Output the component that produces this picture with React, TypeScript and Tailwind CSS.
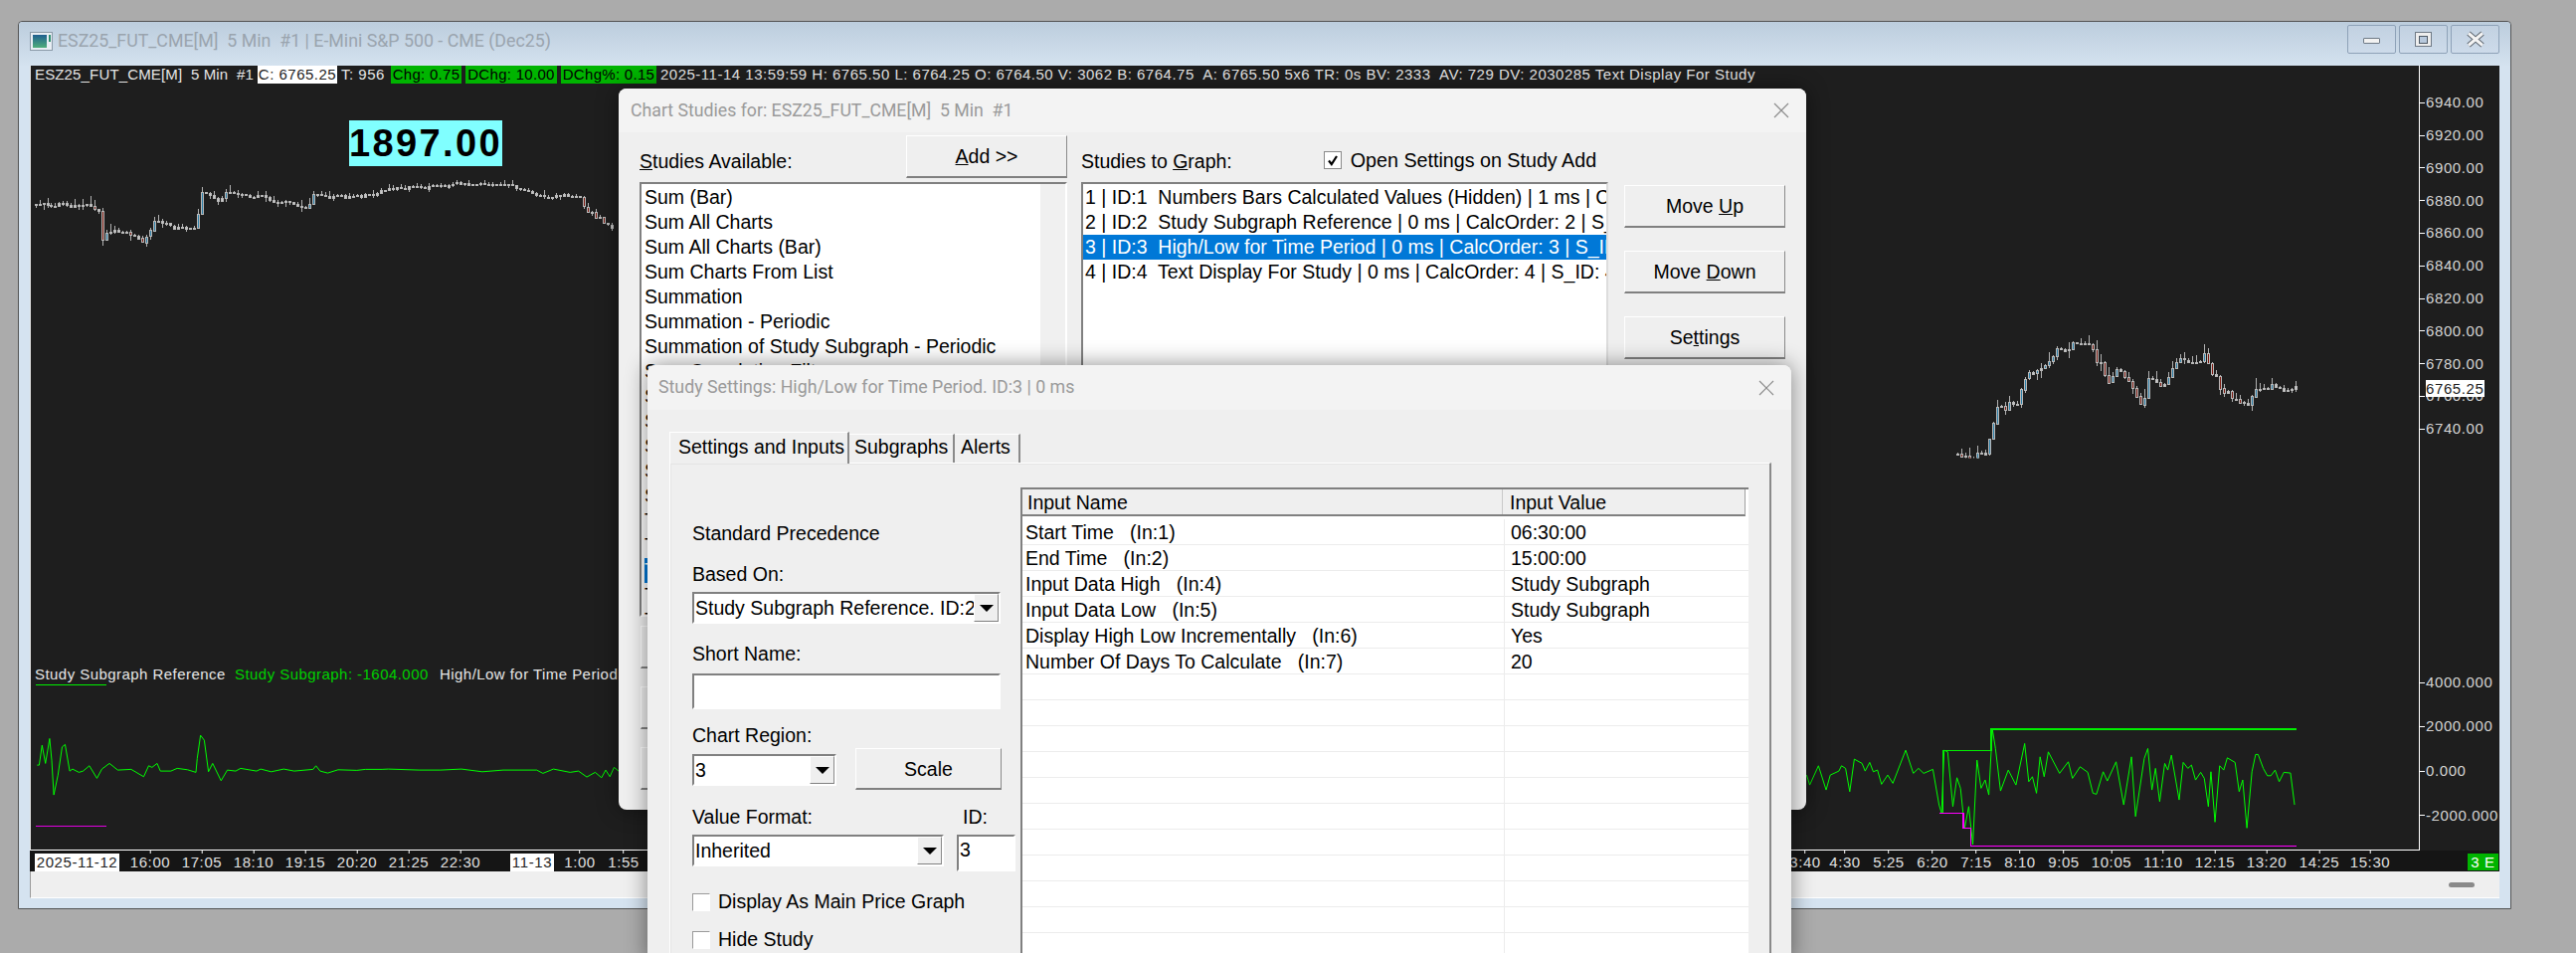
import type { ReactNode } from "react";

type Pt = [number, number];

// ---- chart data, all in page pixels ----
// first stretch of closes, one per bar, read off the reference
const leftCloses = [105, 105, 103, 108, 110, 110, 102, 102, 108, 113, 108, 108, 108, 105, 110, 120, 127, 215, 193, 190, 184, 190, 188, 188, 198, 200, 208, 220, 203, 184, 155, 157, 163, 163, 170, 178, 173, 173, 178, 180, 178, 135, 70, 72, 78, 86, 94, 86, 68, 68, 72, 76, 76, 78, 83, 85, 78, 78, 84, 92, 98, 100, 100, 96, 100, 106, 112, 115, 115, 104, 74];
const leftWay: Pt[] = [[317, 197], [352, 198], [394, 190], [468, 184], [510, 185], [539, 197], [580, 197], [589, 213], [614, 228]];
const rightWay: Pt[] = [[1968, 460], [1995, 458], [2003, 427], [2010, 407], [2025, 408], [2039, 377], [2054, 365], [2078, 348], [2102, 350], [2120, 380], [2129, 370], [2153, 405], [2160, 383], [2175, 387], [2184, 367], [2217, 357], [2230, 387], [2254, 410], [2274, 388], [2296, 390], [2309, 391]];

const studyLeft: Pt[] = [[85,390],[90,390],[97,330],[105,385],[115,310],[120,375],[125,480],[135,420],[145,335],[152,328],[163,408],[170,402],[185,412],[195,408],[210,392],[228,430],[240,402],[258,385],[278,405],[310,403],[340,425],[352,392],[360,397],[372,385],[380,408],[405,408],[420,400],[445,404],[465,412],[468,370],[476,300],[485,315],[495,410],[505,385],[525,437],[540,405],[560,408],[572,400],[610,408],[620,402],[645,410],[675,402],[700,408],[745,403],[752,392],[762,408],[780,414],[805,404],[850,406],[870,403],[910,403],[925,402],[1000,405],[1050,405],[1100,402],[1150,410],[1200,405],[1280,405],[1295,415],[1320,402],[1360,412],[1380,408],[1400,426],[1420,412],[1435,428],[1445,405],[1455,425],[1465,397],[1478,410]];
const studyRight: Pt[] = [[72,420],[78,450],[95,392],[110,465],[118,420],[135,408],[140,392],[148,400],[156,470],[165,372],[180,385],[186,408],[195,382],[202,410],[210,405],[218,448],[230,420],[240,445],[265,345],[280,415],[290,400],[300,415],[318,403],[330,510],[335,535],[340,345],[347,350],[357,515],[365,428],[372,460],[380,580],[388,515],[396,630],[404,375],[412,460],[420,435],[427,480],[434,282],[440,340],[450,468],[465,405],[480,450],[497,325],[505,440],[512,425],[520,475],[527,365],[535,425],[543,350],[565,415],[582,380],[590,430],[605,395],[620,412],[630,475],[637,478],[650,410],[658,438],[675,380],[690,510],[705,365],[713,545],[730,370],[737,340],[745,465],[752,400],[760,500],[770,385],[776,405],[783,360],[798,495],[806,382],[815,400],[822,390],[830,435],[840,412],[847,430],[855,515],[860,410],[868,562],[877,392],[885,405],[892,368],[907,382],[915,470],[922,435],[930,580],[940,410],[947,358],[952,358],[962,400],[970,422],[977,422],[985,405],[993,440],[1002,412],[1015,414],[1023,510]];

const toPath = (pts: Pt[], sx: number, ox: number) =>
  pts.map(([x, y], i) => `${i ? "L" : "M"}${(ox + x / sx).toFixed(1)} ${(640 + y / 3).toFixed(1)}`).join(" ");

const stepHigh = toPath([[338,535],[338,346],[432,346],[432,281],[1026,281]], 1.936, 1780);
const stepLow = toPath([[330,535],[377,535],[377,580],[392,580],[392,634],[1026,634]], 1.936, 1780);

function rng(seed: number) {
  let s = seed;
  return () => {
    s = (s * 16807) % 2147483647;
    return s / 2147483647;
  };
}

function interp(way: Pt[], x: number) {
  for (let i = 1; i < way.length; i++) {
    if (x <= way[i][0]) {
      const [x0, y0] = way[i - 1];
      const [x1, y1] = way[i];
      return y0 + ((y1 - y0) * (x - x0)) / (x1 - x0);
    }
  }
  return way[way.length - 1][1];
}

type Candle = { x: number; top: number; h: number; hi: number; lo: number; down: boolean };

function toCandles(closes: Pt[], seed: number, wick: number): Candle[] {
  const r = rng(seed);
  let prev = closes[0][1];
  return closes.map(([x, close]) => {
    const top = Math.min(prev, close);
    const bot = Math.max(prev, close);
    const c = { x, top, h: Math.max(bot - top, 1), hi: top - r() * r() * wick, lo: bot + r() * r() * wick, down: close > prev };
    prev = close;
    return c;
  });
}

function sampled(way: Pt[], seed: number, noise: number): Pt[] {
  const r = rng(seed);
  const out: Pt[] = [];
  for (let x = way[0][0]; x <= way[way.length - 1][0]; x += 4) {
    out.push([x, interp(way, x) + (r() - 0.5) * noise]);
  }
  return out;
}

const candles = [
  ...toCandles(leftCloses.map((z, i): Pt => [33 + i * 4, 170 + z / 3]), 4711, 9),
  ...toCandles(sampled(leftWay, 1234, 4), 8123, 6),
  ...toCandles(sampled(rightWay, 9377, 10), 5521, 11),
];

// ---- axis labels ----
const priceLabels = ["6940.00", "6920.00", "6900.00", "6880.00", "6860.00", "6840.00", "6820.00", "6800.00", "6780.00", "6760.00", "6740.00"];
const studyLabels = ["4000.000", "2000.000", "0.000", "-2000.000"];
const timeLabels: [string, number][] = [["16:00", 151], ["17:05", 203], ["18:10", 255], ["19:15", 307], ["20:20", 359], ["21:25", 411], ["22:30", 463], ["1:00", 583], ["1:55", 627], ["3:40", 1815], ["4:30", 1855], ["5:25", 1899], ["6:20", 1943], ["7:15", 1987], ["8:10", 2031], ["9:05", 2075], ["10:05", 2123], ["11:10", 2175], ["12:15", 2227], ["13:20", 2279], ["14:25", 2332], ["15:30", 2383]];

const availableStudies = ["Sum (Bar)", "Sum All Charts", "Sum All Charts (Bar)", "Sum Charts From List", "Summation", "Summation - Periodic", "Summation of Study Subgraph - Periodic", "Sum Correlation Filter", "Super Trend", "Swing High And Low", "Swing Index", "Swing Volume", "Swing Weighted", "Tick Volume", "Time Range", "Time Series", "Trade Volume", "Trend Line", "True Range"];
const graphStudies = [
  "1 | ID:1  Numbers Bars Calculated Values (Hidden) | 1 ms | CalcOrder: 1 | S_ID: 1",
  "2 | ID:2  Study Subgraph Reference | 0 ms | CalcOrder: 2 | S_ID: 2",
  "3 | ID:3  High/Low for Time Period | 0 ms | CalcOrder: 3 | S_ID: 3",
  "4 | ID:4  Text Display For Study | 0 ms | CalcOrder: 4 | S_ID: 4",
];
const inputs: [string, string][] = [
  ["Start Time   (In:1)", "06:30:00"],
  ["End Time   (In:2)", "15:00:00"],
  ["Input Data High   (In:4)", "Study Subgraph"],
  ["Input Data Low   (In:5)", "Study Subgraph"],
  ["Display High Low Incrementally   (In:6)", "Yes"],
  ["Number Of Days To Calculate   (In:7)", "20"],
  ...Array.from({ length: 11 }, (): [string, string] => ["", ""]),
];

// ---- small win32 style widgets ----
const raised = "border border-t-white border-l-white border-r-[#8a8a8a] border-b-2 border-b-[#808080] bg-[#efefef]";
const inset = "border-2 border-t-[#808080] border-l-[#808080] border-r-white border-b-white bg-white";

function Btn({ children, className }: { children?: ReactNode; className: string }) {
  return <div className={`${raised} ${className} flex items-center justify-center pt-[2px] text-[19.5px] text-black`}>{children}</div>;
}

function Combo({ value, className }: { value: string; className: string }) {
  return (
    <div className={`${inset} ${className} flex items-center overflow-hidden`}>
      <span className="flex-1 pl-[1px] pt-[2px] text-[19.5px] text-black whitespace-nowrap overflow-hidden">{value}</span>
      <span className="w-[25px] h-full shrink-0 flex items-center justify-center bg-[#efefef] border border-t-white border-l-white border-r-[#8a8a8a] border-b-[#808080]">
        <span className="w-0 h-0 border-x-[7px] border-x-transparent border-t-[7px] border-t-black" />
      </span>
    </div>
  );
}

function Check({ label }: { label: string }) {
  return (
    <div className="flex items-center h-[18px] gap-[8px]">
      <span className="w-[18px] h-[18px] border border-[#9a9a9a] border-r-white border-b-white bg-white" />
      <span className="text-[19.5px] text-black">{label}</span>
    </div>
  );
}

function CloseGlyph() {
  return (
    <svg width="16" height="16" viewBox="0 0 16 16" className="shrink-0">
      <path d="M1 1L15 15M15 1L1 15" stroke="#8c8c8c" strokeWidth="1.2" fill="none" />
    </svg>
  );
}

function WinBtn({ children }: { children: ReactNode }) {
  return (
    <div className="w-[49px] h-[29px] flex items-center justify-center rounded-[2px] border border-[#8ea2b8] bg-gradient-to-b from-[#c2d1e1] to-[#cddbea]">
      {children}
    </div>
  );
}

function ChartDrawing() {
  return (
    <svg viewBox="30 66 2403 789" className="absolute inset-0 w-full h-full">
      <defs>
        <clipPath id="priceClip">
          <rect x="30" y="66" width="2403" height="395" />
        </clipPath>
      </defs>
      <g clipPath="url(#priceClip)" shapeRendering="crispEdges">
        {candles.map((c, i) => {
          const x = Math.round(c.x);
          return (
            <g key={i}>
              <line x1={x + 1.5} x2={x + 1.5} y1={c.hi} y2={c.lo} stroke="#b0b0b0" />
              <rect x={x + 0.5} y={Math.round(c.top) + 0.5} width="2" height={Math.round(c.h)} fill={c.h < 3 ? "#c8c8c8" : c.down ? "#7d1a10" : "#2c7fa8"} stroke="#b9b9b9" />
            </g>
          );
        })}
      </g>
      <path d={toPath(studyLeft, 2.376, 0)} stroke="#00ff00" strokeWidth="1" fill="none" />
      <path d={toPath(studyRight, 1.936, 1780)} stroke="#00ff00" strokeWidth="1" fill="none" />
      <path d={stepHigh} stroke="#00f000" strokeWidth="1.6" fill="none" shapeRendering="crispEdges" />
      <path d={stepLow} stroke="#ff00ff" strokeWidth="1.6" fill="none" shapeRendering="crispEdges" />
      <path d="M34 689.5H106" stroke="#00f000" shapeRendering="crispEdges" />
      <path d="M34 831.5H106" stroke="#e000e0" shapeRendering="crispEdges" />
    </svg>
  );
}

function ChartWindow() {
  const chartText = "text-[15px] leading-[18px] whitespace-pre";
  return (
    <div className="absolute left-[18px] top-[21px] w-[2507px] h-[893px] border border-[#555] rounded-t-[4px] bg-[#d5e3f0]">
      {/* title bar */}
      <div className="h-[44px] flex items-center pl-[11px] pr-[11px] bg-gradient-to-b from-[#bccddd] to-[#d4e2ef] rounded-t-[4px]">
        <svg width="23" height="19" viewBox="0 0 23 19" className="shrink-0 mt-[-6px]">
          <defs>
            <linearGradient id="appIcon" x1="0" y1="0" x2="0" y2="1">
              <stop offset="0" stopColor="#1f5f8f" />
              <stop offset="1" stopColor="#4fae7a" />
            </linearGradient>
          </defs>
          <rect x="0.5" y="0.5" width="22" height="18" fill="#e8eef4" stroke="#8b9aa8" />
          <rect x="3" y="3" width="14" height="13" fill="url(#appIcon)" />
          <rect x="19" y="3" width="2" height="7" fill="#2f8f6f" />
        </svg>
        <span className="ml-[5px] mt-[-6px] text-[17.8px] text-[#9aa4ae] whitespace-pre font-['Roboto',sans-serif]">
          ESZ25_FUT_CME[M]  5 Min  #1 | E-Mini S&amp;P 500 - CME (Dec25)
        </span>
        <div className="ml-auto flex gap-[3px] mt-[-9px]">
          <WinBtn>
            <span className="w-[17px] h-[6px] mt-[3px] rounded-[1px] bg-[#f2f2f2] border border-[#6f7a86]" />
          </WinBtn>
          <WinBtn>
            <span className="w-[17px] h-[15px] bg-[#eeeeee] border border-[#6f7a86] flex items-center justify-center">
              <span className="w-[9px] h-[8px] bg-[#b8c9dd] border border-[#4f5a66]" />
            </span>
          </WinBtn>
          <WinBtn>
            <svg width="20" height="17" viewBox="0 0 20 17">
              <path d="M3 2.5L17 14.5M17 2.5L3 14.5" stroke="#5d6670" strokeWidth="5" fill="none" />
              <path d="M3 2.5L17 14.5M17 2.5L3 14.5" stroke="#f4f4f4" strokeWidth="3" fill="none" />
            </svg>
          </WinBtn>
        </div>
      </div>

      {/* chart */}
      <div className="mx-[11px] w-[2483px] h-[810px] bg-[#1e1e1e] flex flex-col text-[#e6e6e6] font-['Liberation_Sans',Arial,sans-serif]">
        <div className="flex h-[789px]">
          <div className="relative w-[2403px] h-full border-b border-white border-r border-l border-l-[#e0e0e0] overflow-hidden">
            <ChartDrawing />
            <div className={`relative flex h-[18px] items-start pl-[4px] ${chartText}`}>
              <span className="w-[224px] tracking-[0.15px]">ESZ25_FUT_CME[M]  5 Min  #1</span>
              <span className="w-[80px] bg-white text-[#1e1e1e] text-center tracking-[0.5px]">C: 6765.25</span>
              <span className="w-[54px] pl-[4px] tracking-[0.5px]">T: 956</span>
              <span className="w-[71px] bg-[#00b400] text-black text-center tracking-[0.3px]">Chg: 0.75</span>
              <span className="ml-[4px] w-[92px] bg-[#00b400] text-black text-center tracking-[0.3px]">DChg: 10.00</span>
              <span className="ml-[4px] w-[96px] bg-[#00b400] text-black text-center tracking-[0.3px]">DChg%: 0.15</span>
              <span className="ml-[4px] tracking-[0.5px]">2025-11-14 13:59:59 H: 6765.50 L: 6764.25 O: 6764.50 V: 3062 B: 6764.75  A: 6765.50 5x6 TR: 0s BV: 2333  AV: 729 DV: 2030285 Text Display For Study</span>
            </div>
            <div className="absolute left-[320px] top-[55px] w-[154px] h-[46px] bg-[#80ffff] flex items-center justify-center text-black font-bold text-[38px] tracking-[2.4px]">
              1897.00
            </div>
            <div className={`absolute left-[4px] top-[603px] flex tracking-[0.45px] ${chartText}`}>
              <span className="w-[201px]">Study Subgraph Reference</span>
              <span className="w-[206px] text-[#00d000]">Study Subgraph: -1604.000</span>
              <span>High/Low for Time Period</span>
            </div>
          </div>

          {/* price scale */}
          <div className="relative w-[80px] pt-[21px] text-[#d4d4d4] text-[15px] tracking-[0.6px]">
            {priceLabels.map((p) => (
              <div key={p} className="h-[32.8px] flex items-center gap-[1px]">
                <span className="w-[5px] h-px bg-white" />
                <span>{p}</span>
              </div>
            ))}
            <div className="absolute left-[6px] top-[316px] w-[59px] h-[17px] bg-white text-[#1e1e1e] leading-[17px]">6765.25</div>
            <div className="mt-[216px]">
              {studyLabels.map((p) => (
                <div key={p} className="h-[44.6px] flex items-center gap-[1px]">
                  <span className="w-[5px] h-px bg-white" />
                  <span>{p}</span>
                </div>
              ))}
            </div>
          </div>
        </div>

        {/* time scale */}
        <div className="relative h-[21px] text-[#e0e0e0] text-[15px] tracking-[0.6px] bg-[#151515]">
          {timeLabels.map(([t, x]) => (
            <div key={t} className="absolute top-0 flex flex-col items-center -translate-x-1/2" style={{ left: x - 30 }}>
              <span className="w-px h-[3px] bg-white" />
              <span className="leading-[18px]">{t}</span>
            </div>
          ))}
          <div className="absolute left-[5px] top-[3px] w-[85px] h-[18px] bg-white text-[#1e1e1e] text-center leading-[18px]">2025-11-12</div>
          <div className="absolute left-[483px] top-[3px] w-[44px] h-[18px] bg-white text-[#1e1e1e] text-center leading-[18px]">11-13</div>
          <div className="absolute left-[2451px] top-[3px] w-[31px] h-[17px] bg-[#00b400] text-white text-center leading-[17px]">3 E</div>
        </div>
      </div>

      {/* status strip */}
      <div className="mx-[11px] w-[2483px] h-[27px] bg-[#efefef] border-b border-white flex items-center justify-end pr-[25px] border-l border-l-[#999999]">
        <span className="w-[26px] h-[5px] rounded-full bg-[#8a8a8a]" />
      </div>
    </div>
  );
}

function ChartStudiesDialog() {
  return (
    <div className="absolute left-[622px] top-[89px] w-[1194px] h-[725px] rounded-[8px] bg-[#efefef] overflow-hidden shadow-[0_0_22px_rgba(0,0,0,0.45)] text-black">
      <div className="h-[44px] flex items-center justify-between pl-[12px] pr-[17px] bg-[#f3f3f3]">
        <span className="text-[17.7px] text-[#9a9a9a] whitespace-pre font-['Roboto',sans-serif]">Chart Studies for: ESZ25_FUT_CME[M]  5 Min  #1</span>
        <CloseGlyph />
      </div>
      <div className="flex pl-[21px]">
        {/* available */}
        <div className="w-[430px] flex flex-col">
          <div className="h-[50px] flex justify-between pt-[3px]">
            <span className="mt-[14px] text-[19.5px] leading-[24px]"><u>S</u>tudies Available:</span>
            <Btn className="w-[162px] h-[43px]"><span><u>A</u>dd &gt;&gt;</span></Btn>
          </div>
          <div className={`${inset} h-[437px] flex overflow-hidden`}>
            <div className="flex-1 pt-[1px] pl-[3px] text-[19.5px] leading-[25px] whitespace-nowrap overflow-hidden">
              {availableStudies.map((s, i) => (
                <div key={s} className={i === 15 ? "bg-[#0078d7] text-white" : ""}>{s}</div>
              ))}
            </div>
            <div className="w-[25px] bg-[#f0f0f0]" />
          </div>
          <div className="mt-[9px] flex flex-col gap-[18px] pl-[1px]">
            <Btn className="w-[160px] h-[43px]" />
            <Btn className="w-[160px] h-[43px]" />
            <Btn className="w-[160px] h-[43px]" />
          </div>
        </div>
        {/* to graph */}
        <div className="ml-[14px] w-[530px] flex flex-col">
          <div className="h-[50px] flex items-start">
            <span className="mt-[17px] text-[19.5px] leading-[24px]">Studies to <u>G</u>raph:</span>
            <span className="ml-[92px] mt-[19px] w-[18px] h-[18px] bg-white border border-[#8a8a8a] flex items-center justify-center">
              <svg width="12" height="12" viewBox="0 0 12 12"><path d="M2 6.5L4.8 10L10 2" stroke="#000" strokeWidth="2.2" fill="none" /></svg>
            </span>
            <span className="ml-[9px] mt-[16px] text-[19.7px] leading-[24px]">Open Settings on Study Add</span>
          </div>
          <div className="h-[437px] border-2 border-t-[#808080] border-l-[#808080] border-r-[#dddddd] border-b-white bg-white pt-[1px] text-[19.5px] leading-[25px] whitespace-pre overflow-hidden">
            {graphStudies.map((s, i) => (
              <div key={s} className={`pl-[2px] ${i === 2 ? "bg-[#0078d7] text-white" : ""}`}>{s}</div>
            ))}
          </div>
        </div>
        {/* actions */}
        <div className="ml-[16px] w-[162px] pt-[53px] flex flex-col gap-[23px]">
          <Btn className="h-[43px]"><span>Move <u>U</u>p</span></Btn>
          <Btn className="h-[43px]"><span>Move <u>D</u>own</span></Btn>
          <Btn className="h-[43px]"><span>Se<u>t</u>tings</span></Btn>
        </div>
      </div>
    </div>
  );
}

function StudySettingsDialog() {
  const label = "text-[19.5px] leading-[24px] text-black";
  return (
    <div className="absolute left-[651px] top-[367px] w-[1150px] h-[600px] rounded-t-[8px] bg-[#efefef] overflow-hidden shadow-[0_0_22px_rgba(0,0,0,0.45)] text-black">
      <div className="h-[45px] flex items-center justify-between pl-[11px] pr-[17px] bg-[#f3f3f3]">
        <span className="text-[17.8px] text-[#9a9a9a] font-['Roboto',sans-serif]">Study Settings: High/Low for Time Period. ID:3 | 0 ms</span>
        <CloseGlyph />
      </div>

      <div className="ml-[22px] mr-[20px] mt-[22px]">
        {/* tabs */}
        <div className="flex items-end h-[32px] text-[19.5px] leading-[24px] relative z-10">
          <div className="w-[181px] h-[32px] pl-[8px] pt-[2px] bg-[#efefef] border-t border-l border-t-white border-l-white border-r-2 border-r-[#8a8a8a]">Settings and Inputs</div>
          <div className="w-[106px] h-[29px] pl-[5px] bg-[#efefef] border-t border-t-white border-r-2 border-r-[#8a8a8a] mb-[1px]">Subgraphs</div>
          <div className="w-[66px] h-[29px] pl-[6px] bg-[#efefef] border-t border-t-white border-r-2 border-r-[#8a8a8a] mb-[1px]">Alerts</div>
        </div>
        <div className="h-[500px] -mt-[1px] border-t border-l border-t-white border-l-white border-r-2 border-r-[#8a8a8a] flex pl-[22px] pt-[24px] shadow-[inset_1px_1px_0_#e4e4e4]">
          {/* left column */}
          <div className="w-[330px] shrink-0 flex flex-col">
            <div className={`${label} mt-[34px]`}>Standard Precedence</div>
            <div className={`${label} mt-[17px]`}>Based On:</div>
            <Combo value="Study Subgraph Reference. ID:2" className="mt-[6px] w-[310px] h-[32px]" />
            <div className={`${label} mt-[18px]`}>Short Name:</div>
            <div className={`${inset} mt-[8px] w-[310px] h-[36px]`} />
            <div className={`${label} mt-[14px]`}>Chart Region:</div>
            <div className="mt-[1px] w-[311px] flex justify-between items-start">
              <Combo value="3" className="mt-[6px] w-[145px] h-[32px]" />
              <Btn className="w-[147px] h-[42px]">Scale</Btn>
            </div>
            <div className="mt-[15px] flex justify-between w-[325px]">
              <div className="flex flex-col">
                <div className={label}>Value Format:</div>
                <Combo value="Inherited" className="mt-[6px] w-[253px] h-[32px]" />
              </div>
              <div className="flex flex-col w-[59px]">
                <div className={`${label} pl-[6px]`}>ID:</div>
                <div className={`${inset} mt-[6px] h-[37px] pl-[1px] text-[19.5px] leading-[26px]`}>3</div>
              </div>
            </div>
            <div className="mt-[22px]"><Check label="Display As Main Price Graph" /></div>
            <div className="mt-[20px]"><Check label="Hide Study" /></div>
          </div>

          {/* inputs grid */}
          <div className="w-[732px] shrink-0 h-[480px] border-t-2 border-l-2 border-t-[#808080] border-l-[#808080] bg-white text-[19.5px] leading-[26px] overflow-hidden">
            <div className="flex h-[27px] w-[727px] bg-[#efefef] border-b-2 border-b-[#808080] border-r border-r-[#a0a0a0] leading-[27px]">
              <div className="w-[483px] pl-[5px] border-r border-r-[#c8c8c8]">Input Name</div>
              <div className="pl-[7px]">Input Value</div>
            </div>
            <div className="pt-[3px]">
              {inputs.map(([name, value], i) => (
                <div key={i} className="flex h-[26px] border-b border-b-[#ececec]">
                  <div className="w-[485px] pl-[3px] whitespace-pre border-r border-r-[#ececec]">{name}</div>
                  <div className="pl-[6px]">{value}</div>
                </div>
              ))}
            </div>
          </div>
        </div>
      </div>
    </div>
  );
}

export default function App() {
  return (
    <div className="relative w-[2590px] h-[958px] overflow-hidden bg-[#ababab] font-['Liberation_Sans',Arial,sans-serif]">
      <ChartWindow />
      <ChartStudiesDialog />
      <StudySettingsDialog />
    </div>
  );
}
